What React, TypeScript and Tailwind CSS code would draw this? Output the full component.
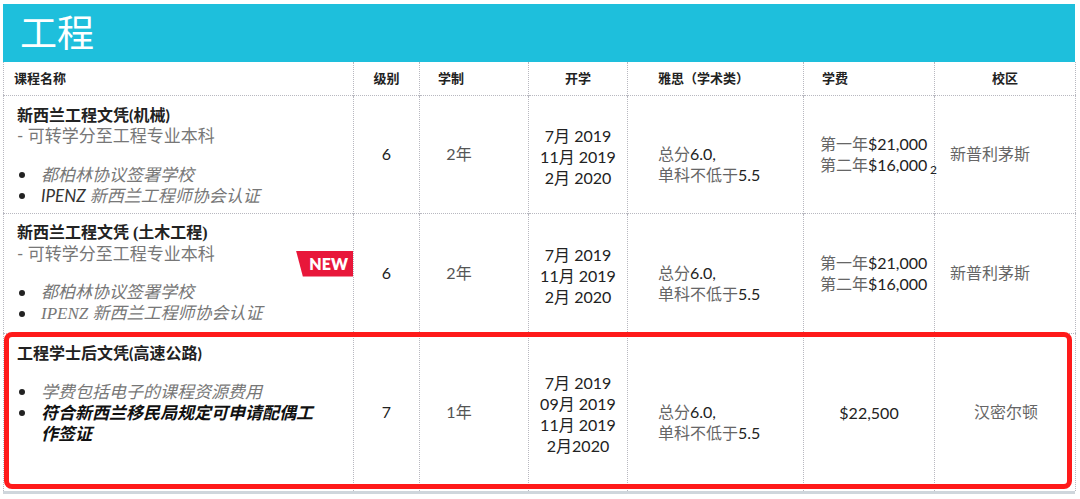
import React from "react";

const cjk = "font-['Lato','Noto_Sans_CJK_SC',sans-serif]";
const serif = "font-['Liberation_Serif','Noto_Sans_CJK_SC',serif]";

interface Course {
  title: React.ReactNode;
  sub?: string;
  bullets: { text: React.ReactNode; strong?: boolean }[];
  level: string;
  years: string;
  intakes: string[];
  fee: React.ReactNode;
  campus: string;
  campusCenter?: boolean;
  isNew?: boolean;
  height: string;
  titleSerif?: boolean;
}

const courses: Course[] = [
  {
    title: "新西兰工程文凭(机械)",
    sub: "- 可转学分至工程专业本科",
    bullets: [
      { text: "都柏林协议签署学校" },
      {
        text: (
          <>
            <span className="text-[#333]">IPENZ</span> 新西兰工程师协会认证
          </>
        ),
      },
    ],
    level: "6",
    years: "2年",
    intakes: ["7月 2019", "11月 2019", "2月 2020"],
    fee: (
      <div className="text-left pl-[16px] relative">
        <div>
          <span className="text-[#666]">第一年</span>$21,000
        </div>
        <div>
          <span className="text-[#666]">第二年</span>$16,000
          <span className="absolute right-[-3px] top-[26px] text-[12px]">2</span>
        </div>
      </div>
    ),
    campus: "新普利茅斯",
    height: "h-[118px]",
  },
  {
    title: "新西兰工程文凭 (土木工程)",
    sub: "- 可转学分至工程专业本科",
    bullets: [
      { text: "都柏林协议签署学校" },
      { text: "IPENZ 新西兰工程师协会认证" },
    ],
    level: "6",
    years: "2年",
    intakes: ["7月 2019", "11月 2019", "2月 2020"],
    fee: (
      <div className="text-left pl-[16px]">
        <div>
          <span className="text-[#666]">第一年</span>$21,000
        </div>
        <div>
          <span className="text-[#666]">第二年</span>$16,000
        </div>
      </div>
    ),
    campus: "新普利茅斯",
    isNew: true,
    height: "h-[120px]",
    titleSerif: true,
  },
  {
    title: "工程学士后文凭(高速公路)",
    bullets: [
      { text: "学费包括电子的课程资源费用" },
      { text: "符合新西兰移民局规定可申请配偶工作签证", strong: true },
    ],
    level: "7",
    years: "1年",
    intakes: ["7月 2019", "09月 2019", "11月 2019", "2月2020"],
    fee: <div className="text-center">$22,500</div>,
    campus: "汉密尔顿",
    campusCenter: true,
    height: "h-[158px]",
  },
];

const cell = "border-r border-dotted border-[#b8b8c0] align-middle";

export default function App() {
  return (
    <div className={`w-[1080px] h-[499px] bg-white overflow-hidden pt-[4px] pl-[3px] ${cjk}`}>
      <div className="relative w-[1072px]">
        <div className="h-[58px] bg-[#1ebfdc] text-white text-[37px] leading-[58px] pl-[17px]">
          工程
        </div>
        <table className="table-fixed border-collapse w-[1072px] text-[#222] border-l border-r border-dotted border-[#b8b8c0]">
          <colgroup>
            <col className="w-[350px]" />
            <col className="w-[66px]" />
            <col className="w-[109px]" />
            <col className="w-[99px]" />
            <col className="w-[176px]" />
            <col className="w-[131px]" />
            <col className="w-[141px]" />
          </colgroup>
          <thead>
            <tr className="h-[33px] text-[13px] font-bold border-b border-dotted border-[#b8b8c0]">
              <th className={`${cell} text-left pl-[10px]`}>课程名称</th>
              <th className={`${cell} text-center`}>级别</th>
              <th className={`${cell} text-left pl-[18px]`}>学制</th>
              <th className={`${cell} text-center`}>开学</th>
              <th className={`${cell} text-left pl-[30px]`}>雅思（学术类）</th>
              <th className={`${cell} text-left pl-[18px]`}>学费</th>
              <th className="text-center">校区</th>
            </tr>
          </thead>
          <tbody>
            {courses.map((c, i) => (
              <tr
                key={i}
                className={`${c.height} ${i < 2 ? "border-b border-dotted border-[#b8b8c0]" : ""}`}
              >
                <td className={`${cell} align-top pl-[13px] pt-[8px] relative`}>
                  <div
                    className={`text-[16px] leading-[21px] font-bold ${c.titleSerif ? serif : ""}`}
                  >
                    {c.title}
                  </div>
                  {c.sub && (
                    <div className="text-[17px] leading-[21px] text-[#777]">{c.sub}</div>
                  )}
                  <ul className="mt-[18px] w-[300px] text-[17px] leading-[21px] italic">
                    {c.bullets.map((b, j) => (
                      <li key={j} className="flex">
                        <span className="w-[24px] shrink-0 flex pt-[8px] pl-[2px]">
                          <span className="w-[6px] h-[6px] rounded-full bg-[#222]" />
                        </span>
                        <span
                          className={
                            b.strong
                              ? "font-bold text-[#111]"
                              : `text-[#777] ${c.titleSerif ? serif : ""}`
                          }
                        >
                          {b.text}
                        </span>
                      </li>
                    ))}
                  </ul>
                  {c.isNew && (
                    <div className="absolute right-0 top-[37px] h-[26px] w-[57px] bg-[#e8173a] [clip-path:polygon(0_0,100%_0,100%_100%,12%_100%)] text-white font-extrabold text-[16px] leading-[26px] text-right pr-[5px] font-['Lato',sans-serif]">
                      NEW
                    </div>
                  )}
                </td>
                <td className={`${cell} text-center text-[16px]`}>{c.level}</td>
                <td className={`${cell} text-center text-[16px] text-[#555] pr-[30px]`}>{c.years}</td>
                <td className={`${cell} text-center text-[16px] leading-[21px] whitespace-nowrap pt-[4px]`}>
                  {c.intakes.map((d) => (
                    <div key={d}>{d}</div>
                  ))}
                </td>
                <td className={`${cell} pl-[30px] text-[16px] leading-[21px] pt-[20px]`}>
                  <div>
                    <span className="text-[#666]">总分</span>6.0,
                  </div>
                  <div>
                    <span className="text-[#666]">单科不低于</span>5.5
                  </div>
                </td>
                <td className={`${cell} text-[16px] leading-[21px]`}>{c.fee}</td>
                <td
                  className={`text-[16px] text-[#666] ${c.campusCenter ? "text-center pl-[2px]" : "text-left pl-[15px]"}`}
                >
                  {c.campus}
                </td>
              </tr>
            ))}
          </tbody>
        </table>
        <div className="h-[3px] bg-[#cfd6dc]" />
        <div className="absolute left-[1px] top-[328px] w-[1068px] h-[157px] border-[5px] border-[#ff1a1a] rounded-[8px] pointer-events-none" />
      </div>
    </div>
  );
}
